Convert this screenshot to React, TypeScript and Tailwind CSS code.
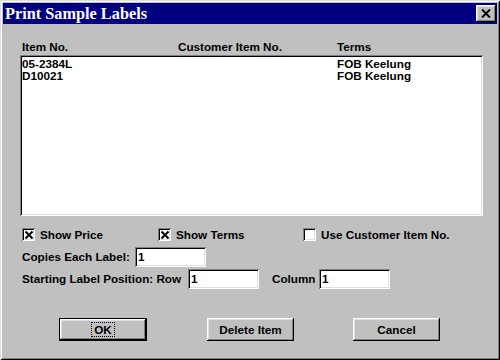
import React from 'react';

const raised =
  'shadow-[inset_-1px_-1px_#000000,inset_1px_1px_#ffffff,inset_-2px_-2px_#808080,inset_2px_2px_#dfdfdf]';
const sunken =
  'shadow-[inset_1px_1px_#808080,inset_-1px_-1px_#ffffff,inset_2px_2px_#000000,inset_-2px_-2px_#dfdfdf]';

const rows = [
  { item: '05-2384L', customer: '', terms: 'FOB Keelung' },
  { item: 'D10021', customer: '', terms: 'FOB Keelung' },
];

function CheckBox({ checked, label, className }: { checked: boolean; label: string; className?: string }) {
  return (
    <div className={`flex items-center ${className ?? ''}`}>
      <div className={`w-[13px] h-[13px] bg-white flex items-center justify-center ${sunken}`}>
        {checked && (
          <svg width="8" height="8" viewBox="0 0 8 8" className="ml-[1px] mt-[1px]">
            <path d="M0.5 0.5L7.5 7.5M7.5 0.5L0.5 7.5" stroke="#000" strokeWidth="2" />
          </svg>
        )}
      </div>
      <span className="ml-[5px]">{label}</span>
    </div>
  );
}

function Field({ value, className }: { value: string; className?: string }) {
  return (
    <div className={`h-[20px] w-[71px] bg-white flex items-center pl-[3px] ${sunken} ${className ?? ''}`}>
      {value}
    </div>
  );
}

function Button({ label, isDefault, className }: { label: string; isDefault?: boolean; className?: string }) {
  if (isDefault) {
    return (
      <div className={`w-[88px] h-[23px] border border-black ${className ?? ''}`}>
        <div className={`w-full h-full flex items-center justify-center ${raised}`}>
          <span className="border border-dotted border-black px-[2px] leading-[13px]">{label}</span>
        </div>
      </div>
    );
  }
  return (
    <div className={`w-[87px] h-[23px] flex items-center justify-center ${raised} ${className ?? ''}`}>
      {label}
    </div>
  );
}

export default function App() {
  return (
    <div
      className="w-[500px] h-[360px] bg-[#c0c0c0] p-[3px] text-black text-[11.7px] font-bold leading-[12px] shadow-[inset_1px_1px_#dfdfdf,inset_-1px_-1px_#000000,inset_2px_2px_#ffffff,inset_-2px_-2px_#808080]"
      style={{ fontFamily: '"Liberation Sans", Arial, sans-serif' }}
    >
      {/* Title bar */}
      <div className="h-[21px] bg-[#000080] flex items-center justify-between pl-[2px] pr-[1px]">
        <span
          className="text-white text-[16.3px] font-bold leading-[16px]"
          style={{ fontFamily: '"Liberation Serif", "Times New Roman", serif' }}
        >
          Print Sample Labels
        </span>
        <div className={`w-[20px] h-[17px] bg-[#c0c0c0] flex items-center justify-center ${raised}`}>
          <svg width="10" height="9" viewBox="0 0 10 9">
            <path d="M1 0.5L9 8.5M9 0.5L1 8.5" stroke="#000" strokeWidth="2" />
          </svg>
        </div>
      </div>

      <div className="px-[17px]">
        {/* Column headers */}
        <div className="mt-[17px] h-[12px] grid grid-cols-[156px_159px_1fr] pl-[2px]">
          <span>Item No.</span>
          <span>Customer Item No.</span>
          <span>Terms</span>
        </div>

        {/* List */}
        <div className={`mt-[2px] w-[463px] h-[161px] bg-white p-[2px] ${sunken}`}>
          {rows.map((r, i) => (
            <div key={i} className="grid grid-cols-[156px_159px_1fr] h-[11px] leading-[11px] mt-[1px]">
              <span>{r.item}</span>
              <span>{r.customer}</span>
              <span>{r.terms}</span>
            </div>
          ))}
        </div>

        {/* Options */}
        <div className="mt-[12px] h-[13px] flex items-center pl-[2px]">
          <CheckBox checked label="Show Price" className="w-[136px]" />
          <CheckBox checked label="Show Terms" className="w-[145px]" />
          <CheckBox checked={false} label="Use Customer Item No." />
        </div>

        <div className="mt-[6px] flex items-center pl-[2px]">
          <span className="w-[113px]">Copies Each Label:</span>
          <Field value="1" />
        </div>

        <div className="mt-[2px] flex items-center pl-[2px]">
          <span className="w-[166px]">Starting Label Position: Row</span>
          <Field value="1" />
          <span className="ml-[13px] w-[47px]">Column</span>
          <Field value="1" />
        </div>

        {/* Buttons */}
        <div className="mt-[29px] flex">
          <Button label="OK" isDefault className="ml-[39px]" />
          <Button label="Delete Item" className="ml-[60px]" />
          <Button label="Cancel" className="ml-[59px]" />
        </div>
      </div>
    </div>
  );
}
